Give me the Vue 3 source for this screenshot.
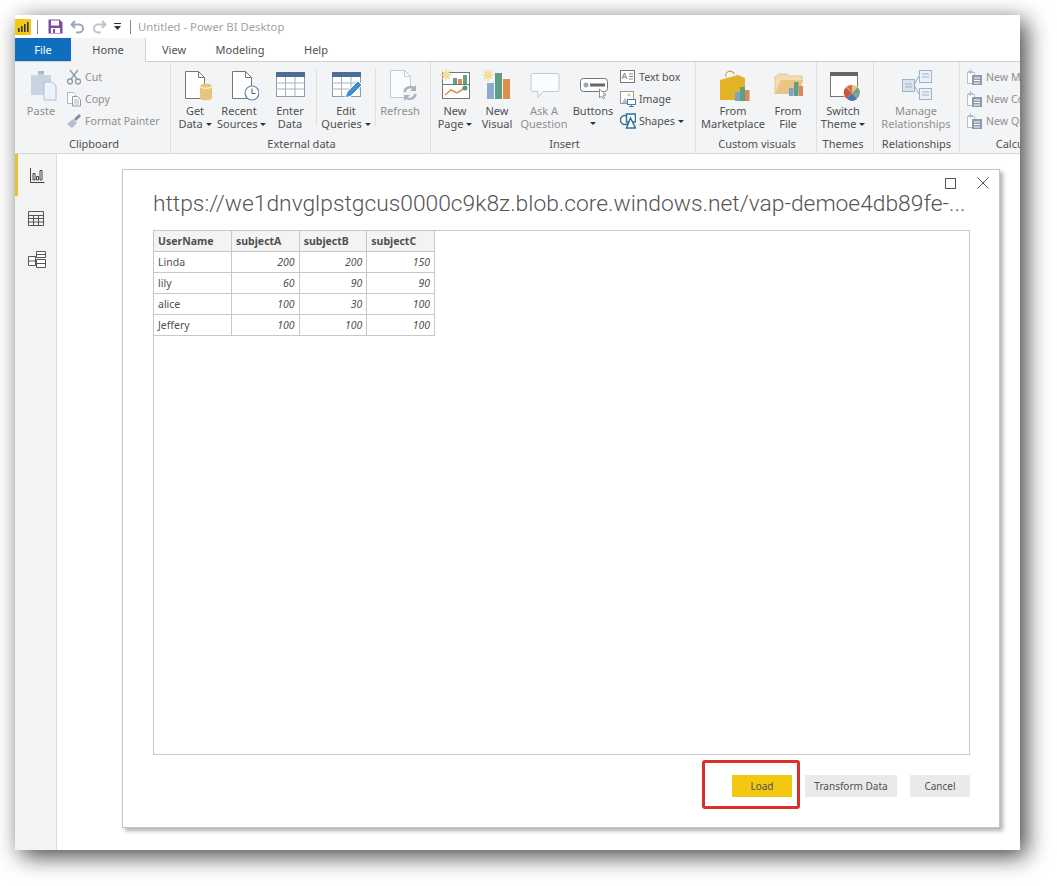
<template>
  <div class="page">
    <div class="window">
      <!-- title bar -->
      <div class="titlebar">
        <svg class="logo" width="16" height="16" viewBox="0 0 16 16">
          <rect width="16" height="16" fill="#f2c811" />
          <path d="M3 13V9h1.600v4zM6 13V7h1.600v6zM9 13V5h1.600v8zM12 13V3h1.600v10z" fill="#333" />
        </svg>
        <span class="tsep first"></span>
        <svg width="15" height="15" viewBox="0 0 15 15">
          <path d="M.5.500h11l3 3v11H.5z" fill="#7a4f9e" />
          <rect x="3" y="1.500" width="8" height="5" fill="#fff" />
          <rect x="3" y="9" width="9" height="5" fill="#fff" />
          <rect x="5" y="10" width="2" height="4" fill="#7a4f9e" />
        </svg>
        <svg class="q" width="15" height="15" viewBox="0 0 15 15">
          <path d="M5 2 1.500 5.500 5 9M2 5.500h7a4 4 0 0 1 0 8H6" fill="none" stroke="#9aa8ba" stroke-width="2" />
        </svg>
        <svg class="q" width="15" height="15" viewBox="0 0 15 15">
          <path d="M10 2l3.500 3.500L10 9M13 5.500H6a4 4 0 0 0 0 8h3" fill="none" stroke="#bcc5d0" stroke-width="2" />
        </svg>
        <svg class="q" width="8" height="8" viewBox="0 0 8 8">
          <path d="M0 0h7v1H0zM0 3h7L3.500 7z" fill="#333" />
        </svg>
        <span class="tsep"></span>
        <span class="apptitle">Untitled - Power BI Desktop</span>
      </div>

      <!-- tabs -->
      <div class="tabs">
        <div class="tab file">File</div>
        <div class="tab home">Home</div>
        <div class="tab view">View</div>
        <div class="tab modeling">Modeling</div>
        <div class="tab help">Help</div>
      </div>

      <!-- ribbon -->
      <div class="ribbon">
        <div class="group g-clip">
          <div class="items">
            <div class="big dis w46">
              <svg width="40" height="34" viewBox="0 0 40 34">
                <path d="M10 7h7V4h6v3h7v20H10z" fill="#c9d4e2" />
                <rect x="17" y="3" width="6" height="3" fill="#a9b6c7" />
                <path d="M23 14h8l4 4v14H23z" fill="#eef3fa" stroke="#a9c0dd" />
              </svg>
              <span>Paste</span>
            </div>
            <div class="smalls clip">
              <div class="small">
                <svg width="16" height="16" viewBox="0 0 16 16">
                  <path d="M4 1l7 9M12 1L5 10" stroke="#8c9bb0" stroke-width="1.300" fill="none" />
                  <circle cx="4" cy="12.500" r="2.500" fill="none" stroke="#8c9bb0" stroke-width="1.300" />
                  <circle cx="12" cy="12.500" r="2.500" fill="none" stroke="#8c9bb0" stroke-width="1.300" />
                </svg>
                <span class="dim">Cut</span>
              </div>
              <div class="small">
                <svg width="16" height="16" viewBox="0 0 16 16">
                  <path d="M1.500 1.500h6l2 2v9h-8z" fill="#fff" stroke="#a9b6c7" />
                  <path d="M6.500 5.500h5l3 3v6.500h-8z" fill="#fff" stroke="#8c9bb0" />
                  <path d="M8 9h5M8 11h5M8 13h5" stroke="#a9b6c7" />
                </svg>
                <span class="dim">Copy</span>
              </div>
              <div class="small">
                <svg width="16" height="16" viewBox="0 0 16 16">
                  <path d="M1 11l6-5 4 4-5 5z" fill="#b4c0cf" />
                  <path d="M8 6l5-5 2 2-5 5z" fill="#7f8c9c" />
                </svg>
                <span class="dim">Format Painter</span>
              </div>
            </div>
          </div>
          <div class="glabel">Clipboard</div>
        </div>

        <div class="group g-ext">
          <div class="items">
            <div class="big w44">
              <svg width="40" height="34" viewBox="0 0 40 34">
                <path d="M10.500 3.500h13l6 6v21h-19z" fill="#fff" stroke="#777" />
                <path d="M23.500 3.500v6h6" fill="none" stroke="#777" />
                <path d="M25 18c0-3 12-3 12 0v12c0 3-12 3-12 0z" fill="#e8c47c" />
                <path d="M25 18c0 3 12 3 12 0" fill="none" stroke="#fff" />
              </svg>
              <span>Get<br />Data <i class="car"></i></span>
            </div>
            <div class="big w44">
              <svg width="40" height="34" viewBox="0 0 40 34">
                <path d="M13.500 3.500h13l6 6v21h-19z" fill="#fff" stroke="#777" />
                <path d="M26.500 3.500v6h6" fill="none" stroke="#777" />
                <circle cx="33" cy="25" r="7" fill="#fff" stroke="#5b87b5" stroke-width="1.200" />
                <path d="M33 20.500V25.500h3.500" fill="none" stroke="#555" />
              </svg>
              <span>Recent<br />Sources <i class="car"></i></span>
            </div>
            <div class="big w52 ml3">
              <svg width="40" height="34" viewBox="0 0 40 34">
                <rect x="6.500" y="4.500" width="28" height="24" fill="#fff" stroke="#8c9bb0" />
                <rect x="6" y="4" width="29" height="5" fill="#4a6d99" />
                <path d="M6 15h29M6 21h29M15.500 9v20M25 9v20" stroke="#a8b2bd" />
              </svg>
              <span>Enter<br />Data</span>
            </div>
            <i class="vsep"></i>
            <div class="big w58">
              <svg width="40" height="34" viewBox="0 0 40 34">
                <rect x="6.500" y="4.500" width="28" height="24" fill="#fff" stroke="#8c9bb0" />
                <rect x="6" y="4" width="29" height="5" fill="#4a6d99" />
                <path d="M6 15h29M6 21h29M15.500 9v20M25 9v20" stroke="#a8b2bd" />
                <path d="M19 30l2-6 11-11 4 4-11 11z" fill="#3f8fd6" stroke="#fff" />
              </svg>
              <span>Edit<br />Queries <i class="car"></i></span>
            </div>
            <i class="vsep"></i>
            <div class="big dis w48">
              <svg width="40" height="34" viewBox="0 0 40 34">
                <path d="M10.500 2.500h14l6 6v21h-20z" fill="#fbfcfe" stroke="#b8cbe2" />
                <path d="M24.500 2.500v6h6" fill="none" stroke="#b8cbe2" />
                <circle cx="30" cy="25" r="7.500" fill="#f3f4f6" />
                <path d="M24.500 24a5.800 5.800 0 0 1 10-3M35.500 26a5.800 5.800 0 0 1-10 3" fill="none" stroke="#a9b3bf" stroke-width="2.500" />
                <path d="M36 17v6h-6zM24 33v-6h6z" fill="#a9b3bf" />
              </svg>
              <span>Refresh</span>
            </div>
          </div>
          <div class="glabel">External data</div>
        </div>

        <div class="group g-ins">
          <div class="items">
            <div class="big w42">
              <svg width="40" height="34" viewBox="0 0 40 34">
                <rect x="7.500" y="4.500" width="27" height="26" fill="#fff" stroke="#777" />
                <path d="M7 16.500h28" stroke="#777" />
                <rect x="18" y="10" width="4" height="6" fill="#66a183" />
                <rect x="23" y="11" width="4" height="5" fill="#e08e4c" />
                <rect x="28" y="7" width="4" height="9" fill="#66a183" />
                <path d="M10 27l6-5 6 3 8-5" fill="none" stroke="#e08e4c" stroke-width="1.500" />
                <circle cx="30" cy="20" r="2.500" fill="#4f9a78" />
                <g stroke="#efd78f" stroke-width="1.200">
                  <path d="M11 1v12M5 7h12M7 3l8 8M15 3l-8 8" />
                </g>
                <circle cx="11" cy="7" r="3.500" fill="#f2dd9c" />
              </svg>
              <span>New<br />Page <i class="car"></i></span>
            </div>
            <div class="big w42">
              <svg width="40" height="34" viewBox="0 0 40 34">
                <rect x="10" y="15" width="7" height="16" fill="#8aaccf" />
                <rect x="18" y="5" width="7" height="26" fill="#5f9e82" />
                <rect x="26" y="11" width="7" height="20" fill="#e08e4c" />
                <g stroke="#efd78f" stroke-width="1.200">
                  <path d="M11 1v12M5 7h12M7 3l8 8M15 3l-8 8" />
                </g>
                <circle cx="11" cy="7" r="3.500" fill="#f2dd9c" />
              </svg>
              <span>New<br />Visual</span>
            </div>
            <div class="big dis w52">
              <svg width="40" height="34" viewBox="0 0 40 34">
                <path d="M9 5.500h24a2 2 0 0 1 2 2v14a2 2 0 0 1-2 2H19l-5 6v-6H9a2 2 0 0 1-2-2v-14a2 2 0 0 1 2-2z" fill="#fbfcfe" stroke="#b8cbe2" />
              </svg>
              <span>Ask A<br />Question</span>
            </div>
            <div class="big w46">
              <svg width="40" height="34" viewBox="0 0 40 34">
                <rect x="7.500" y="10.500" width="27" height="13" rx="3" fill="#fff" stroke="#777" />
                <circle cx="13" cy="17" r="2.500" fill="#8aaccf" />
                <rect x="17" y="15.500" width="15" height="3" fill="#666" />
                <path d="M26.500 21v9l2-2 2 3 1-1-1.500-3h3z" fill="#fff" stroke="#777" stroke-width=".8" />
              </svg>
              <span>Buttons<br /><i class="car solo"></i></span>
            </div>
            <div class="smalls ins">
              <div class="small">
                <svg width="16" height="16" viewBox="0 0 16 16">
                  <rect x=".5" y="1.500" width="14" height="12" fill="#fff" stroke="#777" />
                  <path d="M2 10l2.500-6L7 10M3 8h3M9 5h4M9 7.500h4M9 10h4" fill="none" stroke="#666" stroke-width=".8" />
                </svg>
                <span>Text box</span>
              </div>
              <div class="small">
                <svg width="16" height="16" viewBox="0 0 16 16">
                  <rect x=".5" y=".5" width="13" height="12" fill="#fff" stroke="#999" />
                  <path d="M2 12l3-5 3 5z" fill="#a9c0dd" />
                  <circle cx="9" cy="4" r="1.500" fill="#e9c866" />
                  <rect x="7.500" y="8.500" width="8" height="5" fill="#fff" stroke="#4a7ea8" />
                  <path d="M9 15.500h5M11.500 13.500v2" stroke="#4a7ea8" />
                </svg>
                <span>Image</span>
              </div>
              <div class="small">
                <svg width="16" height="16" viewBox="0 0 16 16">
                  <circle cx="5" cy="7" r="4.500" fill="#fff" stroke="#2f6f9f" stroke-width="1.500" />
                  <rect x="6.500" y="1" width="9" height="8" fill="#fff" stroke="#2f6f9f" stroke-width="1.500" />
                  <path d="M10.500 5l5 10h-9z" fill="#fff" stroke="#2f6f9f" stroke-width="1.500" />
                </svg>
                <span>Shapes <i class="car"></i></span>
              </div>
            </div>
          </div>
          <div class="glabel">Insert</div>
        </div>

        <div class="group g-cust">
          <div class="items">
            <div class="big w70">
              <svg width="40" height="34" viewBox="0 0 40 34">
                <path d="M13 9a4 4 0 0 1 8-3" fill="none" stroke="#c9a332" stroke-width="1.200" />
                <path d="M7 12l18-5 7 3v22H7z" fill="#e2b326" />
                <rect x="22" y="24" width="5" height="9" fill="#7ba3c7" />
                <rect x="27" y="19" width="5" height="14" fill="#5f9e82" />
                <rect x="32" y="22" width="4.500" height="11" fill="#d98a55" />
              </svg>
              <span>From<br />Marketplace</span>
            </div>
            <div class="big w40">
              <svg width="40" height="34" viewBox="0 0 40 34">
                <path d="M7 26V9l4-3h8l2 2h13v6H15z" fill="#f4dcb0" stroke="#dcc08a" stroke-width=".8" />
                <path d="M7 26l6-14h22l-4 14z" fill="#e9c584" />
                <rect x="21" y="20" width="4.500" height="8" fill="#7ba3c7" />
                <rect x="26" y="14" width="4.500" height="14" fill="#5f9e82" />
                <rect x="31" y="18" width="4" height="10" fill="#d98a55" />
              </svg>
              <span>From<br />File</span>
            </div>
          </div>
          <div class="glabel">Custom visuals</div>
        </div>

        <div class="group g-theme">
          <div class="items">
            <div class="big w52">
              <svg width="40" height="34" viewBox="0 0 40 34">
                <rect x="7.500" y="4.500" width="27" height="24" fill="#fff" stroke="#777" />
                <rect x="7" y="4" width="28" height="4" fill="#666" />
                <circle cx="29" cy="25" r="8.500" fill="#fff" />
                <path d="M29 25l-5.500-6.500A8 8 0 0 1 29 17z" fill="#d9694a" />
                <path d="M29 25v-8a8 8 0 0 1 5.500 2z" fill="#e8c47c" />
                <path d="M29 25l5.500-6a8 8 0 0 1 2.500 6z" fill="#6ba585" />
                <path d="M29 25h8a8 8 0 0 1-3 6z" fill="#999" />
                <path d="M29 25l5 6a8 8 0 0 1-10 0z" fill="#3f78b0" />
                <path d="M29 25l-5 6a8 8 0 0 1-1-12z" fill="#c9573c" />
              </svg>
              <span>Switch<br />Theme <i class="car"></i></span>
            </div>
          </div>
          <div class="glabel">Themes</div>
        </div>

        <div class="group g-rel">
          <div class="items">
            <div class="big dis w84">
              <svg width="40" height="34" viewBox="0 0 40 34">
                <path d="M18 17l5-9M18 17l5 9" stroke="#8fa5bd" fill="none" />
                <rect x="6.500" y="11.500" width="12" height="12" fill="#d9e3ee" stroke="#9fb2c7" />
                <rect x="23.500" y="2.500" width="12" height="12" fill="#e9f0f7" stroke="#9fb2c7" />
                <rect x="23.500" y="20.500" width="12" height="11" fill="#e9f0f7" stroke="#9fb2c7" />
                <path d="M9 16h7M9 19h7M26 6h7M26 9h7M26 24h7M26 27h7" stroke="#9fb2c7" />
              </svg>
              <span>Manage<br />Relationships</span>
            </div>
          </div>
          <div class="glabel">Relationships</div>
        </div>

        <div class="group g-calc">
          <div class="items">
            <div class="smalls calc">
              <div class="small" v-for="c in calcItems" :key="c">
                <svg width="16" height="16" viewBox="0 0 16 16">
                  <path d="M.5 3.500h7v11h-7z" fill="#fff" stroke="#b4bdc9" />
                  <rect x="5" y="6" width="10" height="10" fill="#8c9bb0" />
                  <path d="M7 9h6M7 11.500h6M7 14h6" stroke="#fff" />
                  <path d="M3.500 0v5M1 2.500h5" stroke="#b4bdc9" />
                </svg>
                <span class="dim">{{ c }}</span>
              </div>
            </div>
          </div>
          <div class="glabel">Calculations</div>
        </div>
      </div>

      <!-- body -->
      <div class="body">
        <div class="sidebar">
          <div class="side active">
            <svg width="15" height="15" viewBox="0 0 15 15">
              <path d="M.5 0v14.500h14" fill="none" stroke="#444" />
              <path d="M3 5.500h2V12H3zM6.500 8.500h2V12h-2zM10 2.500h2V12h-2z" fill="none" stroke="#444" />
            </svg>
          </div>
          <div class="side table-ico">
            <svg width="16" height="15" viewBox="0 0 16 15">
              <path d="M.5.500h15v14H.5zM.5 4.500h15M.5 7.500h15M.5 11h15M5.500 4.500v10M10.500 4.500v10" fill="none" stroke="#555" />
            </svg>
          </div>
          <div class="side">
            <svg width="19" height="19" viewBox="0 0 19 19">
              <path d="M.5 6.500h7v9h-7zM.5 11h7M8.500 1.500h9v6h-9zM8.500 4.500h9M8.500 9.500h9v8h-9zM8.500 13.500h9" fill="#fff" stroke="#555" />
            </svg>
          </div>
        </div>

        <div class="main">
          <div class="dialog">
            <div class="winbtns">
              <span class="maxbtn"></span>
              <svg width="12" height="12" viewBox="0 0 12 12">
                <path d="M.5.500l11 11M11.500.500l-11 11" stroke="#555" fill="none" />
              </svg>
            </div>
            <div class="dtitle">https://we1dnvglpstgcus0000c9k8z.blob.core.windows.net/vap-demoe4db89fe-...</div>
            <div class="preview">
              <table>
                <thead>
                  <tr>
                    <th v-for="h in headers" :key="h">{{ h }}</th>
                  </tr>
                </thead>
                <tbody>
                  <tr v-for="r in rows" :key="r.name">
                    <td>{{ r.name }}</td>
                    <td v-for="(v, i) in r.vals" :key="i" class="num">{{ v }}</td>
                  </tr>
                </tbody>
              </table>
            </div>
            <div class="actions">
              <span class="highlight"></span>
              <button class="primary">Load</button>
              <button class="transform">Transform Data</button>
              <button class="cancel">Cancel</button>
            </div>
          </div>
        </div>
      </div>
    </div>
  </div>
</template>

<script setup>
const headers = ['UserName', 'subjectA', 'subjectB', 'subjectC']

const rows = [
  { name: 'Linda', vals: [200, 200, 150] },
  { name: 'lily', vals: [60, 90, 90] },
  { name: 'alice', vals: [100, 30, 100] },
  { name: 'Jeffery', vals: [100, 100, 100] }
]

const calcItems = ['New Measure', 'New Column', 'New Quick Measure']
</script>

<style>
html,
body {
  margin: 0;
  background: #fff;
  overflow: hidden;
}
</style>

<style scoped>
.page {
  width: 1057px;
  height: 886px;
  padding: 15px 0 0 15px;
  box-sizing: border-box;
  font-family: "Noto Sans", "Open Sans", sans-serif;
  font-size: 11px;
  color: #505050;
}

.window {
  width: 1005px;
  height: 835px;
  background: #fff;
  display: flex;
  flex-direction: column;
  overflow: hidden;
  box-shadow: 6px 6px 22px rgba(0, 0, 0, 0.75);
}

.titlebar {
  height: 23px;
  flex: none;
  display: flex;
  align-items: center;
}

.logo {
  margin-right: 6px;
}

.tsep {
  width: 1px;
  height: 14px;
  background: #888;
  margin: 0 7px 0 8px;
}

.tsep.first {
  margin: 0 10px 0 0;
}

.q {
  margin-left: 7px;
}

.apptitle {
  font-size: 11.3px;
  color: #a3a3a3;
}

.tabs {
  height: 24px;
  flex: none;
  display: flex;
  box-sizing: border-box;
  border-bottom: 1px solid #d0d0d0;
  font-size: 11px;
}

.tab {
  text-align: center;
  line-height: 24px;
  height: 23px;
}

.file {
  width: 56px;
  background: #106ebe;
  color: #fff;
}

.home {
  width: 75px;
  height: 24px;
  box-sizing: border-box;
  background: #f3f4f6;
  border-right: 1px solid #d0d0d0;
}

.view {
  width: 56px;
}

.modeling {
  width: 76px;
}

.help {
  width: 76px;
}

.ribbon {
  height: 92px;
  flex: none;
  display: flex;
  box-sizing: border-box;
  background: #f3f4f6;
  border-bottom: 1px solid #d8d8d8;
  overflow: hidden;
}

.group {
  flex: none;
  height: 91px;
  box-sizing: border-box;
  border-right: 1px solid #e0e0e0;
  display: flex;
  flex-direction: column;
}

.g-clip { width: 156px; padding-left: 3px; }
.g-ext { width: 260px; padding-left: 2px; }
.g-ins { width: 265px; padding-left: 3px; }
.g-cust { width: 121px; padding-left: 2px; }
.g-theme { width: 57px; padding-right: 4px; }
.g-rel { width: 86px; }
.g-calc { width: 134px; border-right: none; }

.items {
  flex: 1;
  display: flex;
  align-items: flex-start;
}

.big {
  flex: none;
  padding-top: 6px;
  text-align: center;
  line-height: 13px;
}

.big svg {
  display: block;
  margin: 0 auto 2px;
}

.big span {
  white-space: nowrap;
}

.w40 { width: 40px; }
.w42 { width: 42px; }
.w44 { width: 44px; }
.w46 { width: 46px; }
.w48 { width: 48px; }
.w52 { width: 52px; }
.w58 { width: 58px; }
.w70 { width: 70px; }
.w84 { width: 84px; }
.ml3 { margin-left: 3px; }

.dis,
.dim {
  color: #8f8f8f;
}

.vsep {
  flex: none;
  width: 1px;
  height: 58px;
  margin-top: 6px;
  background: #e0e0e0;
}

.car {
  display: inline-block;
  width: 0;
  height: 0;
  border-left: 3px solid transparent;
  border-right: 3px solid transparent;
  border-top: 3px solid #333;
  vertical-align: 2px;
}

.car.solo {
  vertical-align: 3px;
}

.smalls {
  padding-top: 4px;
  font-size: 10.6px;
}

.clip {
  margin-left: 2px;
}

.ins {
  margin-left: 4px;
}

.calc {
  margin-left: 7px;
}

.small {
  height: 22px;
  display: flex;
  align-items: center;
  gap: 3px;
  white-space: nowrap;
}

.glabel {
  flex: none;
  height: 20px;
  line-height: 22px;
  text-align: center;
  white-space: nowrap;
}

.body {
  flex: 1;
  display: flex;
  min-height: 0;
}

.sidebar {
  width: 42px;
  flex: none;
  box-sizing: border-box;
  background: #f3f3f3;
  border-right: 1px solid #dcdcdc;
}

.side {
  height: 42px;
  display: flex;
  align-items: center;
  justify-content: center;
  box-sizing: border-box;
  padding-left: 3px;
}

.side.active {
  border-left: 3px solid #e8c02e;
  padding-left: 0;
}

.side.table-ico {
  padding: 3px 0 0 1px;
}

.main {
  flex: 1;
  padding: 15px 20px 0 65px;
  min-width: 0;
}

.dialog {
  width: 878px;
  height: 659px;
  box-sizing: border-box;
  border: 1px solid #c4c4c4;
  background: #fff;
  box-shadow: 3px 3px 4px rgba(0, 0, 0, 0.3);
  padding: 0 29px 0 30px;
  position: relative;
  display: flex;
  flex-direction: column;
}

.winbtns {
  position: absolute;
  top: 7px;
  right: 10px;
  display: flex;
  align-items: center;
  gap: 21px;
}

.maxbtn {
  width: 9px;
  height: 9px;
  border: 1px solid #555;
}

.dtitle {
  height: 60px;
  flex: none;
  line-height: 68px;
  font-family: Roboto, "Noto Sans", sans-serif;
  font-size: 22.8px;
  font-weight: 300;
  color: #555;
  white-space: nowrap;
}

.preview {
  height: 525px;
  flex: none;
  box-sizing: border-box;
  border: 1px solid #c8c8c8;
}

table {
  border-collapse: collapse;
  table-layout: fixed;
  width: 282px;
  margin: -1px 0 0 -1px;
}

th,
td {
  height: 21px;
  padding: 0 4px;
  box-sizing: border-box;
  border: 1px solid #c8c8c8;
  font-size: 10.5px;
  text-align: left;
  color: #505050;
}

th {
  background: #f3f3f3;
  font-weight: 700;
}

th:first-child {
  width: 78px;
}

.num {
  text-align: right;
  font-style: italic;
}

.actions {
  flex: 1;
  display: flex;
  align-items: flex-start;
  justify-content: flex-end;
  padding-top: 20px;
  position: relative;
}

button {
  height: 22px;
  border: none;
  padding: 0;
  margin: 0;
  font-family: inherit;
  font-size: 10px;
  color: #505050;
  background: #eaeaea;
}

.primary {
  width: 60px;
  background: #f2c811;
}

.transform {
  width: 92px;
  margin-left: 13px;
}

.cancel {
  width: 60px;
  margin-left: 13px;
}

.highlight {
  position: absolute;
  left: 549px;
  top: 5px;
  width: 98px;
  height: 49px;
  box-sizing: border-box;
  border: 3px solid #d9302a;
  border-radius: 3px;
}
</style>
